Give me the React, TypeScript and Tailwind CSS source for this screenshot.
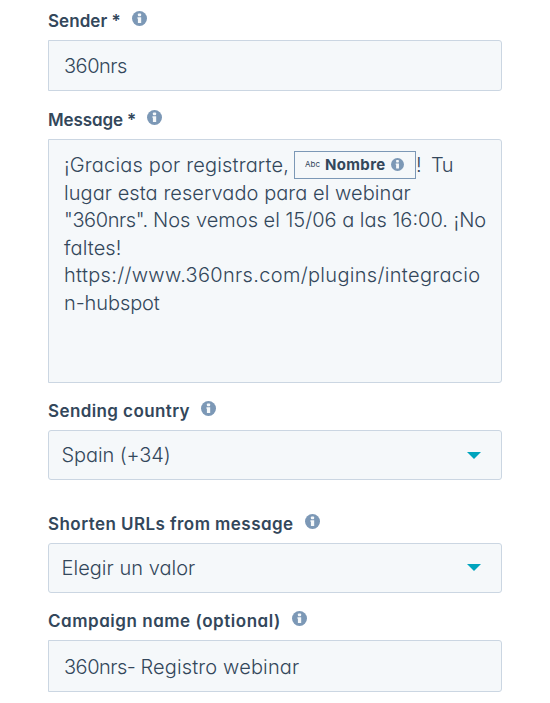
import React from "react";

function InfoIcon({ className }: { className: string }) {
  return (
    <svg viewBox="0 0 16 16" className={className}>
      <circle cx="8" cy="8" r="8" fill="#7c98b6" />
      <rect x="6.3" y="2.6" width="3.4" height="2.9" rx="0.8" fill="#f5f8fa" />
      <path d="M5.8 6.7h4v6.2H6.3V8.2h-.5z" fill="#f5f8fa" />
    </svg>
  );
}

function Label({ text, className }: { text: string; className: string }) {
  return (
    <div className="flex h-6 items-start gap-[11.4px] whitespace-nowrap">
      <span className={`text-[17px] leading-6 font-semibold ${className}`}>{text}</span>
      <InfoIcon className="mt-0.5 size-[15px] shrink-0" />
    </div>
  );
}

function Select({ value, className, arrowClass }: { value: string; className: string; arrowClass: string }) {
  return (
    <div className="flex h-[50px] items-center justify-between rounded-[3px] border border-[#cbd6e2] bg-[#f5f8fa] pr-5 pl-[12.5px] text-xl font-light">
      <span className={className}>{value}</span>
      <svg viewBox="0 0 14 7" className={`h-[7px] w-[14px] ${arrowClass}`}>
        <path d="M0 0h14L7 7z" fill="#00a4bd" />
      </svg>
    </div>
  );
}

function Field({ className, children }: { className: string; children: React.ReactNode }) {
  return (
    <div className={`flex items-center rounded-r-[3px] border border-[#cbd6e2] bg-[#f5f8fa] px-[15px] text-xl font-light whitespace-pre ${className}`}>
      {children}
    </div>
  );
}

export default function App() {
  return (
    <main className="h-[703px] w-[550px] bg-white px-12 pt-[9px] font-['Inter',sans-serif] text-[#33475b] [font-feature-settings:'cv11']">
      <section className="h-[99px]">
        <Label text="Sender *" className="tracking-[0.05px]" />
        <div className="mt-[7px]">
          <Field className="h-[51px]">
            <span className="tracking-[-0.5px]">360nrs</span>
          </Field>
        </div>
      </section>

      <section className="h-[291px]">
        <Label text="Message *" className="tracking-[-0.12px]" />
        <div className="mt-[7px] h-[244px] rounded-r-[3px] border border-[#cbd6e2] bg-[#f5f8fa] px-[15px] pt-3 text-xl leading-[27.5px] font-light whitespace-pre">
          <div className="flex h-[27.5px] items-center">
            <span className="w-[230px] tracking-[0.17px]">¡Gracias por registrarte,</span>
            <span className="mb-[2px] flex h-7 w-[122px] shrink-0 items-center border border-[#7c98b6] pl-2.5">
              <span className="w-[20px] text-[8px] font-normal">Abc</span>
              <span className="w-[66px] text-[15px] font-bold tracking-[0.35px]">Nombre</span>
              <InfoIcon className="size-[13px]" />
            </span>
            <span className="tracking-[-0.6px]">{"!  Tu"}</span>
          </div>
          <div className="tracking-[0.06px]">lugar esta reservado para el webinar</div>
          <div>
            <span className="tracking-[-0.4px]">"360nrs". </span>
            <span>Nos vemos el 15/06 a las 16:00. ¡No</span>
          </div>
          <div className="tracking-[0.1px]">faltes!</div>
          <div className="tracking-[0.32px]">https://www.360nrs.com/plugins/integracio</div>
          <div className="tracking-[-0.1px]">n-hubspot</div>
        </div>
      </section>

      <section className="h-[113px]">
        <Label text="Sending country" className="tracking-[0.4px]" />
        <div className="mt-[7px]">
          <Select value="Spain (+34)" className="tracking-[-0.1px]" arrowClass="mt-px" />
        </div>
      </section>

      <section className="h-[97px]">
        <Label text="Shorten URLs from message" className="tracking-[0.44px]" />
        <div className="mt-[7px]">
          <Select value="Elegir un valor" className="tracking-[0.03px]" arrowClass="mb-px" />
        </div>
      </section>

      <section>
        <Label text="Campaign name (optional)" className="tracking-[0.53px]" />
        <div className="mt-[7px]">
          <Field className="h-[52px] pt-px">
            <span className="tracking-[-0.5px]">360nrs- </span>
            <span className="tracking-[0.14px]">Registro webinar</span>
          </Field>
        </div>
      </section>
    </main>
  );
}
